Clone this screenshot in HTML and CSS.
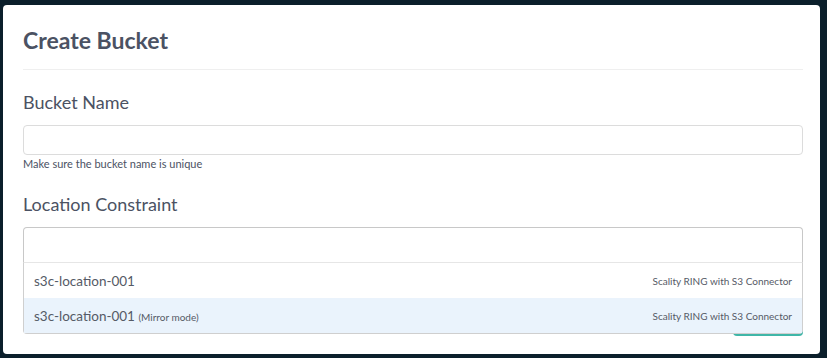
FILE: index.html
```html
<html>
<head>
    <meta charset="utf-8">
    <link rel="stylesheet" href="styles.css">
</head>

<body>
    <div class="card">
        <h2 class="card-title">Create Bucket</h2>
        <form class="form-group">
            <label for="bucket-name">Bucket Name</label>
            <input type="text" class="textbox" id="bucket-name">
            <small class="hint">Make sure the bucket name is unique</small>

            <label for="location">Location Constraint</label>
            <div class="select">
                <div class="select-control" id="location"></div>
                <ul class="select-menu">
                    <li class="option">
                        <span>s3c-location-001</span>
                        <span class="option-type">Scality RING with S3 Connector</span>
                    </li>
                    <li class="option focused">
                        <span>s3c-location-001 <span class="option-note">(Mirror mode)</span></span>
                        <span class="option-type">Scality RING with S3 Connector</span>
                    </li>
                </ul>
            </div>

            <div class="actions">
                <button type="submit" class="button" aria-label="Create"></button>
            </div>
        </form>
    </div>
</body>
</html>
```

FILE: styles.css
```css
html, body {
    margin: 0;
    height: 100%;
}

body {
    background-color: #0b1f2b;
    padding: 5px 7px 4px 3px;
    box-sizing: border-box;
    font-family: Lato, "Open Sans", sans-serif;
    color: #4b5263;
}

.card {
    height: 100%;
    box-sizing: border-box;
    background-color: #fff;
    border-radius: 4px;
    padding: 20px 17px 18px 20px;
    display: flex;
    flex-direction: column;
}

.card-title {
    margin: 0;
    font-size: 23px;
    font-weight: 700;
    line-height: 30px;
    padding-bottom: 14px;
    border-bottom: 1px solid #efefef;
}

.form-group {
    flex: 1;
    display: flex;
    flex-direction: column;
    margin: 0;
}

    .form-group label {
        display: block;
        font-size: 18px;
        line-height: 24px;
        margin-top: 20px;
        margin-bottom: 11px;
        color: #4b5263;
    }

.textbox {
    display: block;
    width: 100%;
    height: 30px;
    box-sizing: border-box;
    border: 1px solid #dcdcdc;
    border-radius: 4px;
    margin: 0;
}

.hint {
    display: block;
    font-size: 11px;
    line-height: 16px;
    margin-top: 1px;
    margin-bottom: 0;
    color: #4b5263;
}

.select {
    position: relative;
}

.select-control {
    height: 35px;
    box-sizing: border-box;
    border: 1px solid #c8c8c8;
    border-bottom: none;
    border-radius: 4px 4px 0 0;
}

.select-menu {
    position: absolute;
    top: 100%;
    left: 0;
    right: 0;
    margin: 0;
    padding: 0;
    list-style: none;
    background-color: #fff;
    border: 1px solid #cfcfcf;
    border-top-color: #e6e6e6;
    border-radius: 0 0 4px 4px;
    z-index: 2;
}

    .select-menu .option {
        display: flex;
        justify-content: space-between;
        align-items: center;
        height: 35px;
        padding: 0 10px;
        font-size: 13.5px;
        color: #555a66;
    }

    .select-menu .option.focused {
        background-color: #eaf3fc;
    }

.option-note {
    font-size: 10px;
}

.option-type {
    font-size: 10px;
}

.actions {
    margin-top: auto;
    display: flex;
    justify-content: flex-end;
}

.button {
    width: 70px;
    height: 30px;
    border: none;
    border-radius: 4px;
    background-color: #3fb6a8;
    color: #fff;
}
```
